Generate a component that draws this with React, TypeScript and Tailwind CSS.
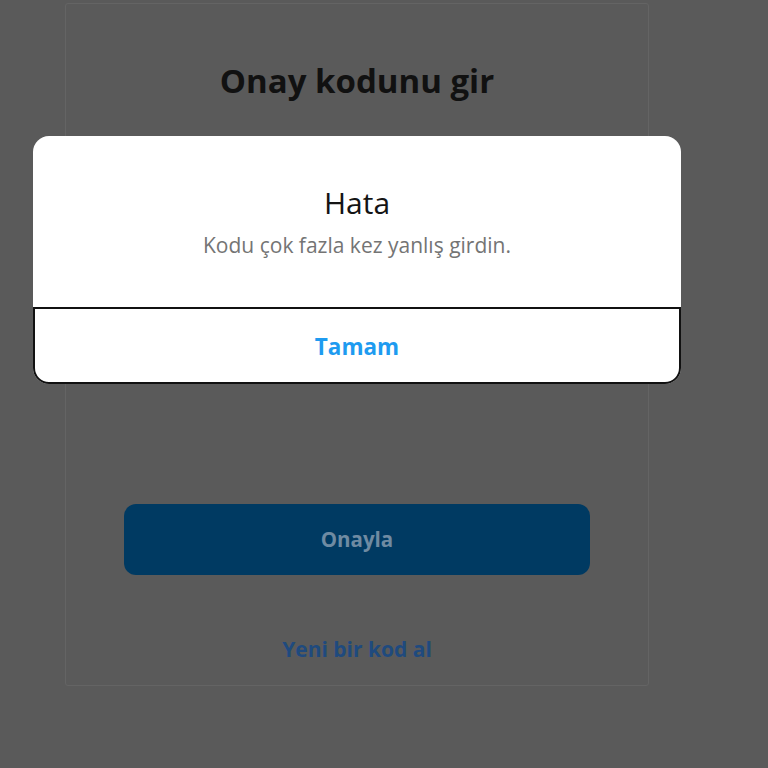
import React from 'react';

const font = { fontFamily: '"Open Sans", "Noto Sans", sans-serif' };

const App: React.FC = () => {
  return (
    <div className="relative h-[768px] w-full overflow-hidden bg-[#5a5a5a]" style={font}>
      {/* dimmed page behind the dialog */}
      <div className="ml-[65px] mt-[3px] flex h-[683px] w-[584px] flex-col items-center rounded-[3px] border border-[#646464]">
        <h1 className="mt-[55px] text-[33px] font-bold leading-[44px] text-[#111111]">Onay kodunu gir</h1>
        <p className="mt-[26px] w-[470px] text-center text-[19px] leading-[28px] text-[#1e1e1e]">
          Sana gönderdiğimiz 6 haneli kodu buraya gir ve hesabını onayla.
        </p>
        <div className="mt-auto flex w-full flex-col items-center px-[58px]">
          <button className="flex h-[71px] w-full items-center justify-center rounded-[12px] bg-[#003a62] text-[20.5px] font-bold text-[#6f8ba2]">
            Onayla
          </button>
          <a className="mb-[21px] mt-[59px] text-[21px] font-bold leading-[30px] text-[#1f4a7e]">Yeni bir kod al</a>
        </div>
      </div>

      {/* error dialog */}
      <div className="absolute left-[33px] top-[136px] w-[648px] rounded-[16px] bg-white">
        <div className="flex h-[171px] flex-col items-center pt-[47px]">
          <h2 className="text-[30px] leading-[40px] text-[#141414]">Hata</h2>
          <p className="mt-[7px] text-[21px] leading-[30px] text-[#747474]">Kodu çok fazla kez yanlış girdin.</p>
        </div>
        <button className="flex h-[77px] w-full items-center justify-center rounded-b-[16px] border-2 border-[#111111] pt-[3px] text-[22.5px] font-bold text-[#1e9bf0]">
          Tamam
        </button>
      </div>
    </div>
  );
};

export default App;
